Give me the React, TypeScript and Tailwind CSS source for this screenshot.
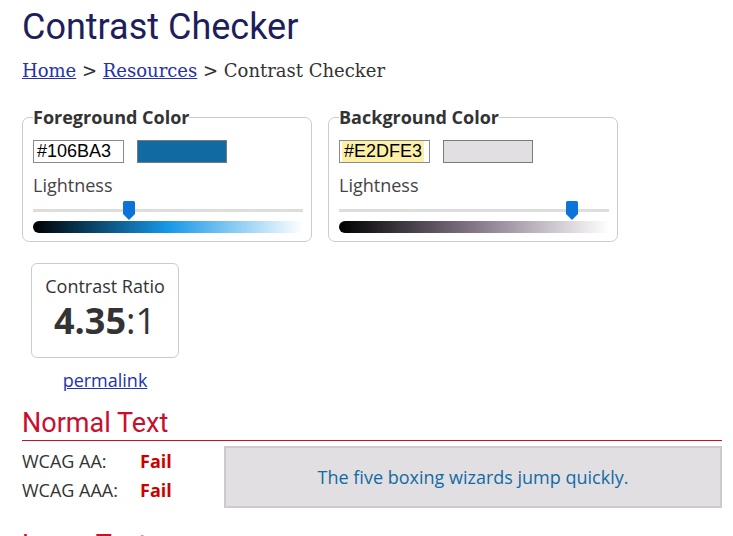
import type { ReactNode } from 'react'

const openSans = "font-['Open_Sans',sans-serif]"

type ColorBoxProps = {
  legend: string
  hex: string
  swatch: string
  gradient: string
  thumbLeft: number
  highlight?: boolean
}

function Thumb({ left }: { left: number }) {
  return (
    <svg
      width="12"
      height="19"
      viewBox="0 0 12 19"
      className="absolute top-0"
      style={{ left }}
    >
      <path d="M0 1.5Q0 0 1.5 0H10.5Q12 0 12 1.5V13L6 19L0 13Z" fill="#0a74da" />
    </svg>
  )
}

function ColorBox({ legend, hex, swatch, gradient, thumbLeft, highlight }: ColorBoxProps) {
  return (
    <fieldset className="w-[290px] border border-[#cccccc] rounded-[7px] pl-[10px] pr-[8px] pt-[11px] pb-[8px]">
      <legend className={`${openSans} text-[18px] leading-[24px] font-bold text-[#333333] px-0`}>
        {legend}
      </legend>

      {/* hex input + swatch */}
      <div className="flex items-center gap-[13px]">
        <div className="w-[91px] h-[23px] border border-[#8a8a8a] flex items-center pl-[2px] font-['Liberation_Sans',Arial,sans-serif] text-[18px] text-black">
          <span className={highlight ? 'bg-[#fdf0a6] px-[2px] leading-[21px]' : 'px-[1px]'}>{hex}</span>
        </div>
        <div className="w-[90px] h-[23px] border border-[#7a7a7a]" style={{ background: swatch }} />
      </div>

      <div className={`${openSans} text-[18px] leading-[24px] text-[#444444] mt-[10px]`}>Lightness</div>

      {/* lightness slider */}
      <div className="relative h-[19px] mt-[4px]">
        <div className="absolute left-0 right-0 top-[8px] h-[3px] bg-[#dddddd]" />
        <Thumb left={thumbLeft} />
      </div>
      <div className="h-[12px] rounded-l-full mt-[1px]" style={{ background: gradient }} />
    </fieldset>
  )
}

function ResultRow({ label, children }: { label: string; children: ReactNode }) {
  return (
    <div className={`${openSans} flex items-center h-[29px] text-[18px]`}>
      <span className="w-[118px] text-[#333333]">{label}</span>
      {children}
    </div>
  )
}

export default function App() {
  return (
    <div className="bg-white min-h-[536px] overflow-hidden">
      <div className="w-[700px] ml-[22px] pt-[5px]">
        <h1 className="font-['Roboto',sans-serif] text-[36px] leading-[44px] text-[#1e1e5c] font-normal">
          Contrast Checker
        </h1>

        <nav className="font-['DejaVu_Serif',serif] text-[18px] leading-[24px] text-[#333333] mt-[10px]">
          <a href="#" className="text-[#2433a8] underline">Home</a>
          {' > '}
          <a href="#" className="text-[#2433a8] underline">Resources</a>
          {' > Contrast Checker'}
        </nav>

        <div className="flex gap-[16px] mt-[22px]">
          <ColorBox
            legend="Foreground Color"
            hex="#106BA3"
            swatch="#106BA3"
            gradient="linear-gradient(to right, #000000, hsl(203 82% 50%) 50%, #ffffff)"
            thumbLeft={90}
          />
          <ColorBox
            legend="Background Color"
            hex="#E2DFE3"
            swatch="#E2DFE3"
            gradient="linear-gradient(to right, #000000, hsl(285 7% 50%) 50%, #ffffff)"
            thumbLeft={227}
            highlight
          />
        </div>

        {/* contrast ratio */}
        <div className="ml-[9px] mt-[21px] w-[148px] flex flex-col items-center">
          <div className={`${openSans} w-full h-[95px] border border-[#cccccc] rounded-[6px] flex flex-col items-center pt-[10px] text-[#333333]`}>
            <div className="text-[18px] leading-[24px]">Contrast Ratio</div>
            <div className="text-[36px] leading-[44px] mt-[1px]">
              <span className="font-bold">4.35</span>:1
            </div>
          </div>
          <a href="#" className={`${openSans} text-[18px] leading-[24px] text-[#2433a8] underline mt-[10px]`}>
            permalink
          </a>
        </div>

        {/* normal text */}
        <h2 className="font-['Roboto',sans-serif] text-[27px] leading-[34px] text-[#c8102e] border-b border-b-[#c8102e] mt-[14px]">
          Normal Text
        </h2>
        <div className="flex mt-[5px]">
          <div className="w-[202px] pt-[1px]">
            <ResultRow label="WCAG AA:">
              <span className="font-bold text-[#cc0000]">Fail</span>
            </ResultRow>
            <ResultRow label="WCAG AAA:">
              <span className="font-bold text-[#cc0000]">Fail</span>
            </ResultRow>
          </div>
          <div className={`${openSans} flex-1 h-[62px] border-2 border-[#cbcbcb] bg-[#E2DFE3] flex items-center justify-center text-[18px] text-[#106BA3]`}>
            The five boxing wizards jump quickly.
          </div>
        </div>

        <h2 className="font-['Roboto',sans-serif] text-[27px] leading-[34px] text-[#c8102e] mt-[20px]">
          Large Text
        </h2>
      </div>
    </div>
  )
}
